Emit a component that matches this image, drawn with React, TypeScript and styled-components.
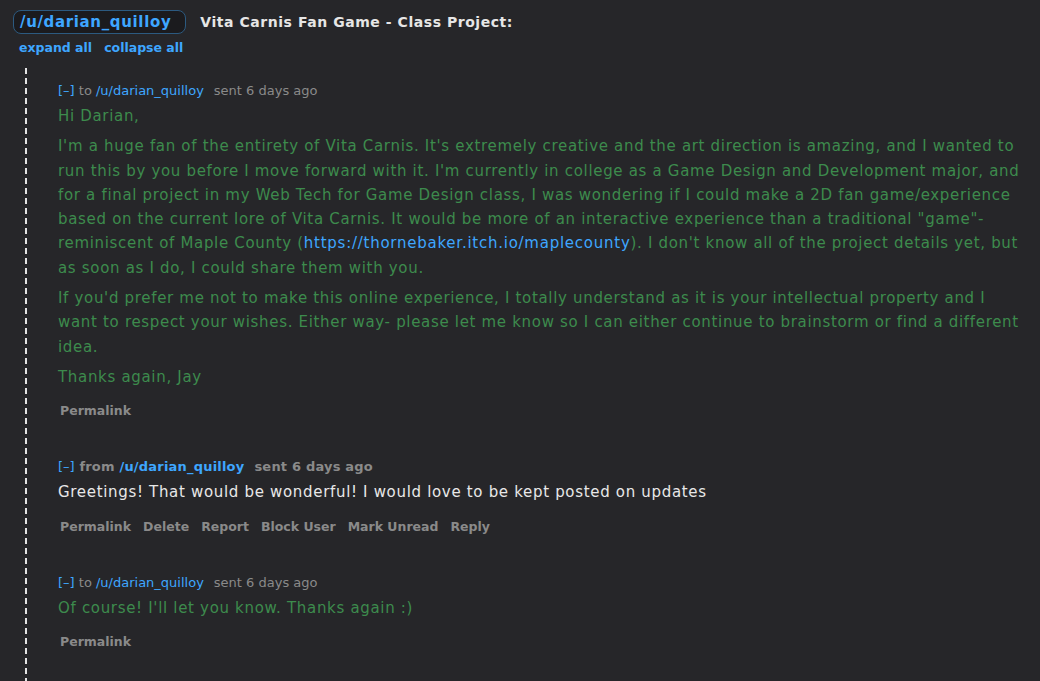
import { createGlobalStyle, styled } from "styled-components";

const GlobalStyle = createGlobalStyle`
    html, body {
        margin: 0;
        padding: 0;
        background-color: #262629;
    }
    body {
        font-family: "DejaVu Sans", Verdana, sans-serif;
    }
`;

const Page = styled.div`
    width: 1040px;
    height: 681px;
    overflow: hidden;
    background-color: #262629;
    padding: 10px 0 0 13px;
    box-sizing: border-box;
`;

const HeaderRow = styled.div`
    display: flex;
    align-items: center;
    gap: 14px;
`;

const UserBadge = styled.a`
    display: inline-block;
    height: 24px;
    line-height: 22px;
    box-sizing: border-box;
    padding: 0 14px 0 6px;
    border: 1px solid #2c5a80;
    border-radius: 8px;
    background-color: #1b1b1e;
    color: #3ea6ff;
    font-weight: bold;
    font-size: 15px;
    letter-spacing: 0.65px;
    text-decoration: none;
`;

const Title = styled.h1`
    margin: 0;
    color: #e6e6e6;
    font-size: 14px;
    font-weight: bold;
    letter-spacing: 0.55px;
`;

const ToggleRow = styled.div`
    display: flex;
    gap: 12px;
    margin: 6px 0 0 6px;
`;

const ToggleLink = styled.a`
    color: #3ea6ff;
    font-size: 12.5px;
    font-weight: bold;
    line-height: 16px;
`;

const Thread = styled.div`
    margin: 12px 0 0 12px;
    padding: 15px 0 0 33px;
    height: 620px;
    width: 965px;
    background: linear-gradient(to bottom, #e4e4e4 6px, transparent 6px) 0 0 / 2px 10px repeat-y;
`;

const Message = styled.div`
    margin-bottom: 40px;
`;

const Meta = styled.div<{ $bold?: boolean }>`
    font-size: 13px;
    line-height: 16px;
    color: #8a8a8a;
    font-weight: ${(p) => (p.$bold ? "bold" : "normal")};
    letter-spacing: ${(p) => (p.$bold ? "0.2px" : "0")};
`;

const Collapse = styled.span`
    color: #3ea6ff;
    font-weight: normal;
    letter-spacing: 0;
`;

const UserLink = styled.a`
    color: #3ea6ff;
    text-decoration: none;
`;

const Sent = styled.span`
    margin-left: 10px;
`;

const Body = styled.div<{ $mine?: boolean }>`
    margin-top: 5px;
    font-size: 15px;
    line-height: 24.3px;
    letter-spacing: 0.68px;
    color: ${(p) => (p.$mine ? "#3d8b4d" : "#e8e8e8")};

    p {
        margin: 0 0 6px;
    }
`;

const ExtLink = styled.a`
    color: #3ea6ff;
    text-decoration: none;
    letter-spacing: 0.75px;
`;

const Actions = styled.div`
    display: flex;
    gap: 12px;
    margin-top: 14px;
    padding-left: 2px;
`;

const Action = styled.a`
    color: #8a8a8a;
    font-size: 12.5px;
    font-weight: bold;
    line-height: 16px;
`;

export default function App() {
    return (
        <Page>
            <GlobalStyle />
            <HeaderRow>
                <UserBadge>/u/darian_quilloy</UserBadge>
                <Title>Vita Carnis Fan Game - Class Project:</Title>
            </HeaderRow>
            <ToggleRow>
                <ToggleLink>expand all</ToggleLink>
                <ToggleLink>collapse all</ToggleLink>
            </ToggleRow>
            <Thread>
                <Message>
                    <Meta>
                        <Collapse>[–]</Collapse> to <UserLink>/u/darian_quilloy</UserLink>
                        <Sent>sent 6 days ago</Sent>
                    </Meta>
                    <Body $mine>
                        <p>Hi Darian,</p>
                        <p>
                            I'm a huge fan of the entirety of Vita Carnis. It's extremely creative and the art direction is
                            amazing, and I wanted to run this by you before I move forward with it. I'm currently in college
                            as a Game Design and Development major, and for a final project in my Web Tech for Game Design
                            class, I was wondering if I could make a 2D fan game/experience based on the current lore of Vita
                            Carnis. It would be more of an interactive experience than a traditional "game"- reminiscent of
                            Maple County (<ExtLink>https://thornebaker.itch.io/maplecounty</ExtLink>). I don't know all of
                            the project details yet, but as soon as I do, I could share them with you.
                        </p>
                        <p>
                            If you'd prefer me not to make this online experience, I totally understand as it is your
                            intellectual property and I want to respect your wishes. Either way- please let me know so I can
                            either continue to brainstorm or find a different idea.
                        </p>
                        <p>Thanks again, Jay</p>
                    </Body>
                    <Actions>
                        <Action>Permalink</Action>
                    </Actions>
                </Message>
                <Message>
                    <Meta $bold>
                        <Collapse>[–]</Collapse> from <UserLink>/u/darian_quilloy</UserLink>
                        <Sent>sent 6 days ago</Sent>
                    </Meta>
                    <Body>
                        <p>Greetings! That would be wonderful! I would love to be kept posted on updates</p>
                    </Body>
                    <Actions>
                        <Action>Permalink</Action>
                        <Action>Delete</Action>
                        <Action>Report</Action>
                        <Action>Block User</Action>
                        <Action>Mark Unread</Action>
                        <Action>Reply</Action>
                    </Actions>
                </Message>
                <Message>
                    <Meta>
                        <Collapse>[–]</Collapse> to <UserLink>/u/darian_quilloy</UserLink>
                        <Sent>sent 6 days ago</Sent>
                    </Meta>
                    <Body $mine>
                        <p>Of course! I'll let you know. Thanks again :)</p>
                    </Body>
                    <Actions>
                        <Action>Permalink</Action>
                    </Actions>
                </Message>
            </Thread>
        </Page>
    );
}
